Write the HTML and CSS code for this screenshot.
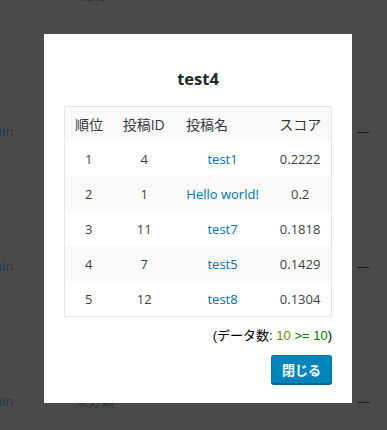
FILE: index.html
```html
<!DOCTYPE html>
<html lang="ja">
<head>
    <meta charset="UTF-8">
    <meta name="viewport" content="width=device-width, initial-scale=1.0">
    <title>関連記事スコア</title>
    <link rel="stylesheet" href="styles.css">
</head>
<body>
    <!-- 背景のページ(オーバーレイで暗くなっている) -->
    <div class="bg-list">
        <div class="bg-row">
            <span class="bg-author"></span>
            <span class="bg-cat">Hello</span>
            <span class="bg-dash"></span>
        </div>
        <div class="bg-row">
            <span class="bg-author">admin</span>
            <span class="bg-cat"></span>
            <span class="bg-dash">—</span>
        </div>
        <div class="bg-row">
            <span class="bg-author">admin</span>
            <span class="bg-cat"></span>
            <span class="bg-dash">—</span>
        </div>
        <div class="bg-row">
            <span class="bg-author">admin</span>
            <span class="bg-cat">未分類</span>
            <span class="bg-dash">—</span>
        </div>
    </div>

    <div class="modal">
        <h2 class="modal-title">test4</h2>
        <table class="score-table">
            <colgroup>
                <col class="col-rank">
                <col class="col-id">
                <col class="col-name">
                <col class="col-score">
            </colgroup>
            <thead>
                <tr>
                    <th>順位</th>
                    <th>投稿ID</th>
                    <th>投稿名</th>
                    <th>スコア</th>
                </tr>
            </thead>
            <tbody>
                <tr><td>1</td><td>4</td><td><a href="#">test1</a></td><td>0.2222</td></tr>
                <tr><td>2</td><td>1</td><td><a href="#">Hello world!</a></td><td>0.2</td></tr>
                <tr><td>3</td><td>11</td><td><a href="#">test7</a></td><td>0.1818</td></tr>
                <tr><td>4</td><td>7</td><td><a href="#">test5</a></td><td>0.1429</td></tr>
                <tr><td>5</td><td>12</td><td><a href="#">test8</a></td><td>0.1304</td></tr>
            </tbody>
        </table>
        <p class="data-count">(データ数: <span class="count-num">10</span> <span class="count-ok">&gt;= 10</span>)</p>
        <div class="modal-actions">
            <button type="button" class="btn">閉じる</button>
        </div>
    </div>
</body>
</html>
```

FILE: styles.css
```css
body {
    margin: 0;
    padding: 0;
    background-color: #4b4b4b;
    font-family: "Open Sans", "Noto Sans CJK JP", sans-serif;
    height: 430px;
    overflow: hidden;
}
.bg-list {
    margin-top: -72px;
}
.bg-row {
    height: 135px;
    display: flex;
    align-items: center;
    font-size: 13px;
}
.bg-author {
    width: 70px;
    margin-left: -25px;
    color: #1c3a4c;
}
.bg-cat {
    width: 282px;
    margin-left: 30px;
    color: #1d3444;
}
.bg-dash {
    color: #1a1a1a;
}
.modal {
    position: fixed;
    left: 44px;
    top: 34px;
    width: 268px;
    padding: 14px 20px 19px;
    background-color: #fff;
}
.modal-title {
    margin: 20px 0 16px;
    font-size: 16.5px;
    line-height: 22px;
    font-weight: 700;
    text-align: center;
    color: #23282d;
}
.score-table {
    width: 100%;
    table-layout: fixed;
    border-collapse: collapse;
    border: 1px solid #e5e5e5;
    font-size: 13px;
    color: #3f3f3f;
}
.col-rank { width: 48px; }
.col-id { width: 63px; }
.col-name { width: 93px; }
.col-score { width: 62px; }
.score-table th {
    height: 34px;
    padding: 0 0 0 10px;
    text-align: left;
    font-weight: 400;
    font-size: 14px;
    color: #32373c;
    background-color: #f9f9f9;
}
.score-table td {
    height: 35px;
    padding: 0;
    text-align: center;
    white-space: nowrap;
}
.score-table tbody tr:nth-child(even) td {
    background-color: #f9f9f9;
}
.score-table a {
    color: #0073aa;
    text-decoration: none;
}
.data-count {
    margin: 11px 0 0;
    text-align: right;
    font-family: "Liberation Sans", "Noto Sans CJK JP", sans-serif;
    font-size: 13px;
    line-height: 16px;
    color: #000;
}
.count-num {
    color: #6b8a00;
}
.count-ok {
    color: #008000;
}
.modal-actions {
    margin-top: 11px;
    display: flex;
    justify-content: flex-end;
}
.btn {
    height: 29px;
    padding: 0 10px;
    font-family: "Noto Sans CJK JP", sans-serif;
    font-size: 13px;
    font-weight: 700;
    color: #fff;
    background-color: #0085ba;
    border: 1px solid #0073aa;
    border-bottom-color: #006799;
    border-radius: 3px;
    box-shadow: 0 1px 0 #006799;
    cursor: pointer;
}
```
